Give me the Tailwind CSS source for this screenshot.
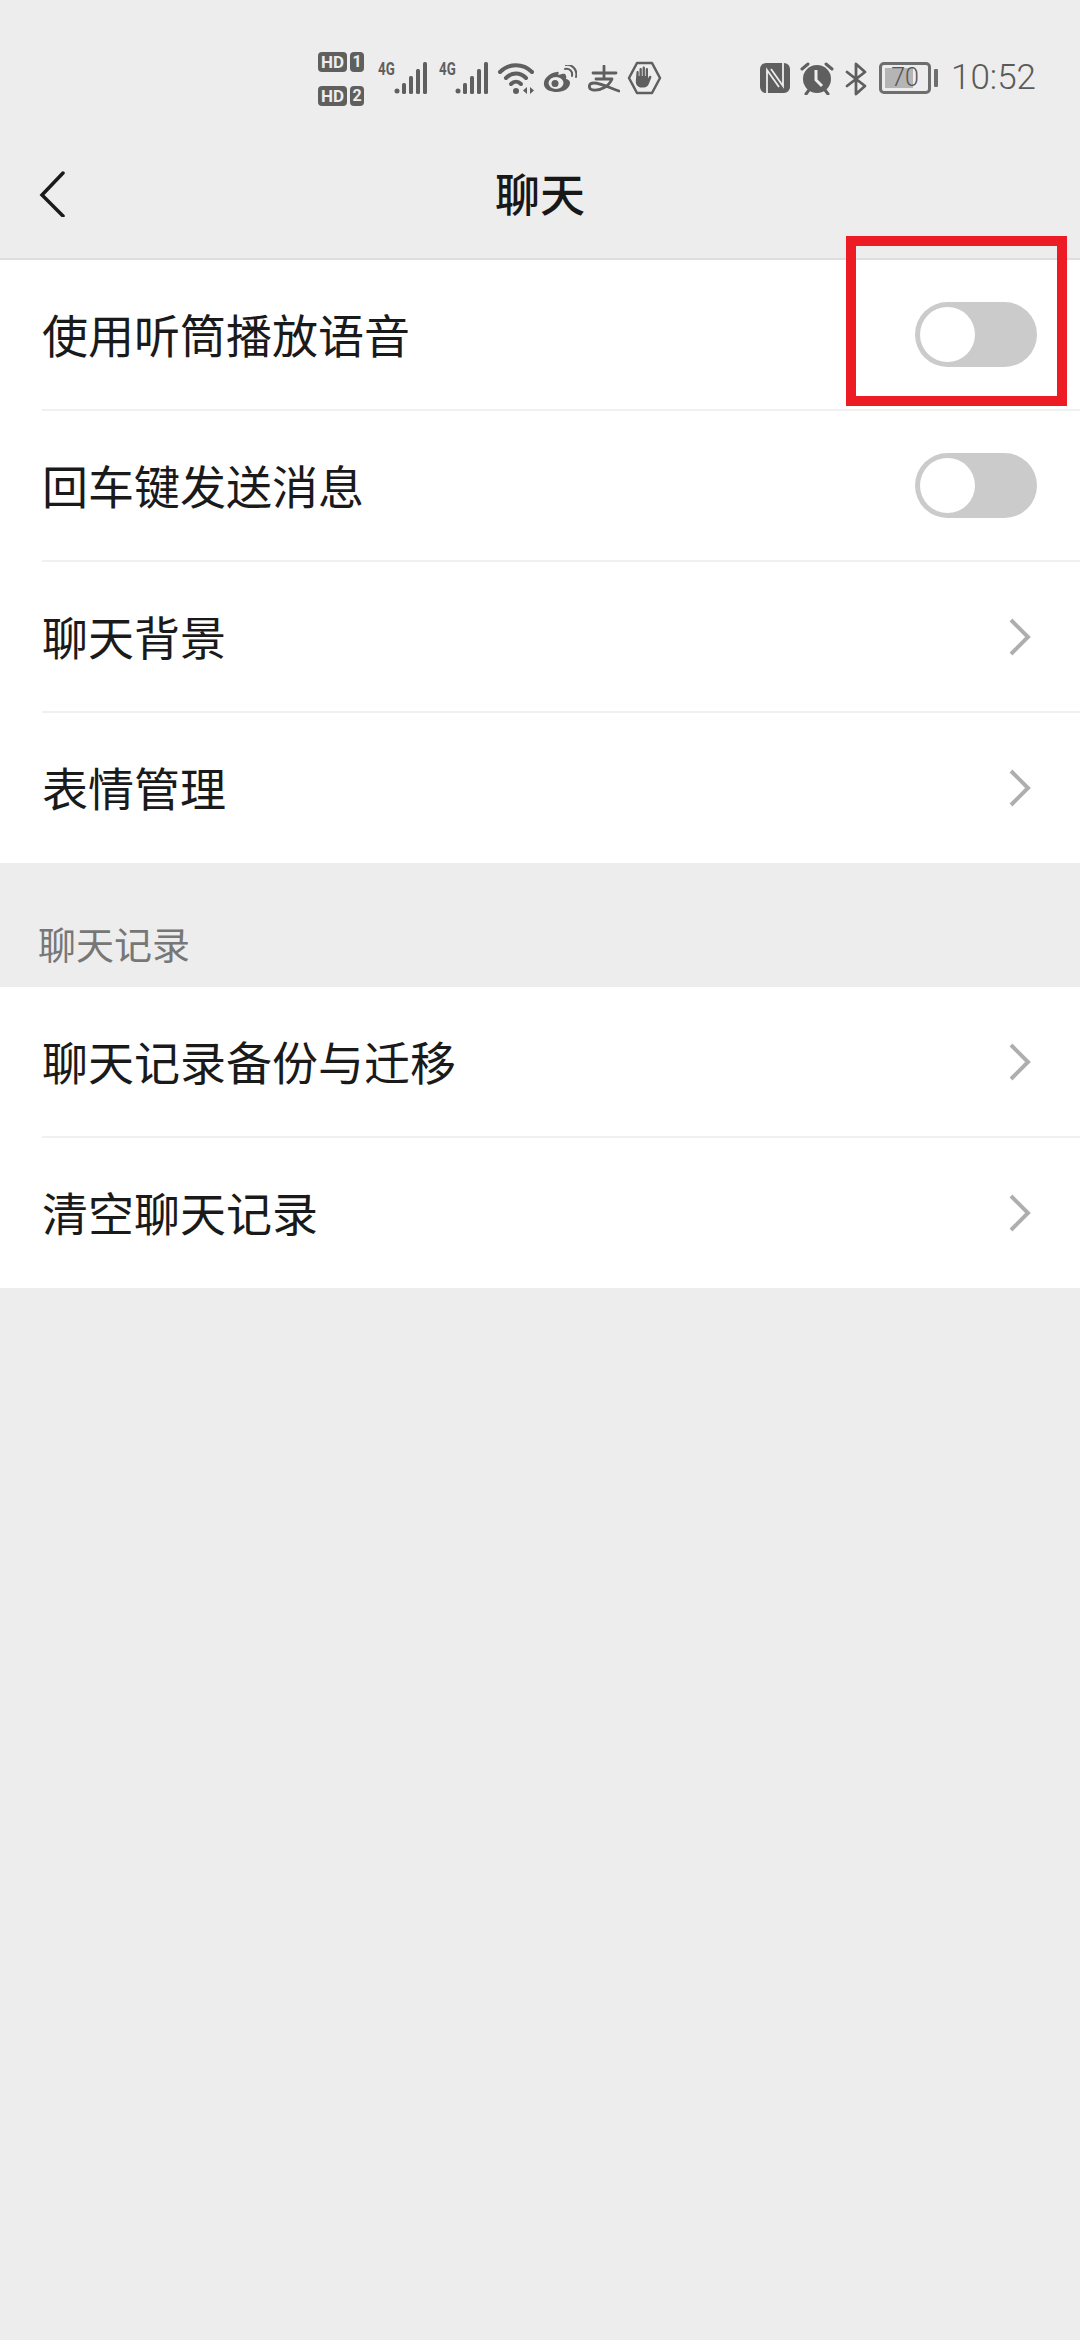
<!DOCTYPE html>
<html lang="zh-CN">
<head>
    <meta charset="UTF-8">
    <meta name="viewport" content="width=device-width, initial-scale=1.0">
    <title>聊天</title>
    <script src="https://cdn.jsdelivr.net/npm/@tailwindcss/browser@4"></script>
</head>
<body class="relative w-[1080px] h-[2340px] overflow-hidden bg-[#ededed] font-['Noto_Sans_CJK_SC',sans-serif]">

    <!-- status bar -->
    <div class="h-[120px] pt-[52px] pl-[318px] flex items-start text-[#5f5f5f]">
        <div class="w-[48px] flex flex-col gap-[14px]">
            <div class="flex gap-[3px]">
                <span class="w-[29px] h-[20px] rounded-[4px] bg-[#5f5f5f] text-[#ededed] text-[17px] leading-[20px] font-bold text-center font-['Roboto',sans-serif]">HD</span>
                <span class="w-[14px] h-[20px] rounded-[4px] bg-[#5f5f5f] text-[#ededed] text-[16px] leading-[20px] font-bold text-center font-['Roboto',sans-serif]">1</span>
            </div>
            <div class="flex gap-[3px]">
                <span class="w-[29px] h-[20px] rounded-[4px] bg-[#5f5f5f] text-[#ededed] text-[17px] leading-[20px] font-bold text-center font-['Roboto',sans-serif]">HD</span>
                <span class="w-[14px] h-[20px] rounded-[4px] bg-[#5f5f5f] text-[#ededed] text-[16px] leading-[20px] font-bold text-center font-['Roboto',sans-serif]">2</span>
            </div>
        </div>

        <div class="relative ml-[12px] w-[50px] h-[44px]">
            <span class="absolute left-0 top-[9px] text-[19px] leading-[16px] font-bold scale-x-[0.7] origin-left font-['Roboto',sans-serif]">4G</span>
            <svg class="absolute left-[16px] top-[10px]" width="34" height="33" viewBox="0 0 34 33" fill="#5f5f5f">
                <circle cx="3" cy="29" r="2.500"/>
                <rect x="8" y="21" width="4" height="11" rx="1.500"/>
                <rect x="15" y="14" width="4" height="18" rx="1.500"/>
                <rect x="22" y="7" width="4" height="25" rx="1.500"/>
                <rect x="29" y="0" width="4" height="32" rx="1.500"/>
            </svg>
        </div>
        <div class="relative ml-[11px] w-[50px] h-[44px]">
            <span class="absolute left-0 top-[9px] text-[19px] leading-[16px] font-bold scale-x-[0.7] origin-left font-['Roboto',sans-serif]">4G</span>
            <svg class="absolute left-[16px] top-[10px]" width="34" height="33" viewBox="0 0 34 33" fill="#5f5f5f">
                <circle cx="3" cy="29" r="2.500"/>
                <rect x="8" y="21" width="4" height="11" rx="1.500"/>
                <rect x="15" y="14" width="4" height="18" rx="1.500"/>
                <rect x="22" y="7" width="4" height="25" rx="1.500"/>
                <rect x="29" y="0" width="4" height="32" rx="1.500"/>
            </svg>
        </div>

        <!-- wifi -->
        <svg class="ml-[9px] mt-[10px]" width="38" height="33" viewBox="0 0 38 33" fill="none" stroke="#5f5f5f" stroke-width="4" stroke-linecap="round">
            <path d="M2 10C11 1 25 1 34 10"/>
            <path d="M8 16C14 10 22 10 28 16"/>
            <path d="M13 22C16 19 20 19 23 22"/>
            <circle cx="18" cy="29" r="3" fill="#5f5f5f" stroke="none"/>
            <path d="M29 25v7l-4-3.500zM32 25v7l4-3.500z" fill="#5f5f5f" stroke="none"/>
        </svg>

        <!-- weibo -->
        <svg class="ml-[7px] mt-[13px]" width="34" height="28" viewBox="0 0 34 28" fill="none">
            <path d="M14 7C6 8 0 14 1 20C2 25 8 27 14 27C21 27 27 23 27 18C27 15 24 14 23 14C24 10 22 8 19 9L15 10C16 8 16 6 14 7Z" fill="#5f5f5f"/>
            <ellipse cx="13" cy="18" rx="7.500" ry="6" fill="#ededed"/>
            <circle cx="12" cy="18.500" r="3.500" fill="#5f5f5f"/>
            <path d="M22 4C26 3 30 6 29 11M23 0C29 -1 35 5 33 12" stroke="#5f5f5f" stroke-width="2" stroke-linecap="round"/>
        </svg>

        <!-- alipay -->
        <svg class="ml-[11px] mt-[13px]" width="32" height="28" viewBox="0 0 32 28" fill="none" stroke="#5f5f5f" stroke-width="2.800" stroke-linecap="round" stroke-linejoin="round">
            <path d="M5 8H28M16 1V13"/>
            <path d="M8 14H24C21 21 13 26 5 25C0 24 0 18 6 18C13 18 22 23 31 26"/>
        </svg>

        <!-- app guard -->
        <svg class="ml-[7px] mt-[9px]" width="35" height="34" viewBox="0 0 35 34">
            <path d="M10 2H25L33 17L25 32H10L2 17Z" fill="none" stroke="#5f5f5f" stroke-width="2.500" stroke-linejoin="round"/>
            <path d="M9.500 11c0-1.500 2.200-1.500 2.200 0v4h.8V8c0-1.500 2.300-1.500 2.300 0v7h.8V6.500c0-1.500 2.300-1.500 2.300 0V15h.8V8c0-1.500 2.300-1.500 2.300 0v9.500l1-2c.8-1.600 3-.8 2.300 1l-2.300 6c-1 2.500-2.800 4-5.500 4h-2c-3.500 0-5.700-2.500-5.700-6z" fill="#5f5f5f"/>
        </svg>

        <!-- nfc -->
        <svg class="ml-[98px] mt-[11px]" width="30" height="30" viewBox="0 0 30 30">
            <rect width="30" height="30" rx="6" fill="#5f5f5f"/>
            <path d="M7 30V7L19 24M23 0V23L11 6" fill="none" stroke="#ededed" stroke-width="1.800"/>
        </svg>

        <!-- alarm -->
        <svg class="ml-[10px] mt-[10px]" width="34" height="33" viewBox="0 0 34 33">
            <circle cx="17" cy="17" r="14" fill="#5f5f5f"/>
            <path d="M16 8v10l6 6" fill="none" stroke="#ededed" stroke-width="3"/>
            <path d="M2 7L8 2M32 7L26 2M6 32L9 28M28 32L25 28" stroke="#5f5f5f" stroke-width="3" stroke-linecap="round"/>
        </svg>

        <!-- bluetooth -->
        <svg class="ml-[11px] mt-[10px]" width="22" height="34" viewBox="0 0 22 34" fill="none" stroke="#5f5f5f" stroke-width="2.800" stroke-linejoin="round" stroke-linecap="round">
            <path d="M2 10L20 24L11 32V2L20 10L2 24"/>
        </svg>

        <!-- battery -->
        <div class="relative ml-[12px] mt-[10px] w-[52px] h-[32px] rounded-[5px] border-[3px] border-[#6e6e6e]">
            <div class="absolute left-[3px] top-[3px] bottom-[3px] w-[28px] bg-[#b5b5b5]"></div>
            <span class="absolute inset-0 text-center text-[#555] text-[25px] leading-[26px] font-['Roboto',sans-serif] font-light">70</span>
        </div>
        <div class="ml-[3px] mt-[17px] w-[4px] h-[18px] rounded-[1px] bg-[#6e6e6e]"></div>

        <span class="ml-[13px] mt-[5px] text-[35px] leading-[42px] font-['Roboto',sans-serif] font-light text-[#5a5a5a]">10:52</span>
    </div>

    <!-- title bar -->
    <header class="relative h-[140px] flex items-center justify-center border-b-2 border-[#dedede] pt-[8px]">
        <svg class="absolute left-[38px] top-[49px]" width="30" height="48" viewBox="0 0 30 48" fill="none" stroke="#1a1a1a" stroke-width="3.500" stroke-linecap="round">
            <path d="M25 4L4 26L25 47"/>
        </svg>
        <h1 class="text-[45px] leading-[60px] font-medium text-[#181818]">聊天</h1>
    </header>

    <main>
        <section class="bg-white">
            <div class="h-[151px] ml-[42px] pr-[43px] flex items-center justify-between border-b-2 border-[#f0f0f0]">
                <span class="text-[46px] leading-[60px] text-[#1a1a1a] -translate-y-[2px]">使用听筒播放语音</span>
                <div class="w-[122px] h-[65px] rounded-full bg-[#cbcbcb] p-[5px]"><div class="w-[55px] h-[55px] rounded-full bg-white"></div></div>
            </div>
            <div class="h-[151px] ml-[42px] pr-[43px] flex items-center justify-between border-b-2 border-[#f0f0f0]">
                <span class="text-[46px] leading-[60px] text-[#1a1a1a] -translate-y-[2px]">回车键发送消息</span>
                <div class="w-[122px] h-[65px] rounded-full bg-[#cbcbcb] p-[5px]"><div class="w-[55px] h-[55px] rounded-full bg-white"></div></div>
            </div>
            <div class="h-[151px] ml-[42px] pr-[48px] flex items-center justify-between border-b-2 border-[#f0f0f0]">
                <span class="text-[46px] leading-[60px] text-[#1a1a1a] -translate-y-[2px]">聊天背景</span>
                <svg width="24" height="38" viewBox="0 0 24 38" fill="none" stroke="#aeaeae" stroke-width="4"><path d="M3 2L20 19L3 36"/></svg>
            </div>
            <div class="h-[150px] ml-[42px] pr-[48px] flex items-center justify-between">
                <span class="text-[46px] leading-[60px] text-[#1a1a1a] -translate-y-[2px]">表情管理</span>
                <svg width="24" height="38" viewBox="0 0 24 38" fill="none" stroke="#aeaeae" stroke-width="4"><path d="M3 2L20 19L3 36"/></svg>
            </div>
        </section>

        <h2 class="h-[124px] pl-[38px] pt-[54px] text-[38px] leading-[52px] text-[#777777]">聊天记录</h2>

        <section class="bg-white">
            <div class="h-[151px] ml-[42px] pr-[48px] flex items-center justify-between border-b-2 border-[#f0f0f0]">
                <span class="text-[46px] leading-[60px] text-[#1a1a1a] -translate-y-[2px]">聊天记录备份与迁移</span>
                <svg width="24" height="38" viewBox="0 0 24 38" fill="none" stroke="#aeaeae" stroke-width="4"><path d="M3 2L20 19L3 36"/></svg>
            </div>
            <div class="h-[150px] ml-[42px] pr-[48px] flex items-center justify-between">
                <span class="text-[46px] leading-[60px] text-[#1a1a1a] -translate-y-[2px]">清空聊天记录</span>
                <svg width="24" height="38" viewBox="0 0 24 38" fill="none" stroke="#aeaeae" stroke-width="4"><path d="M3 2L20 19L3 36"/></svg>
            </div>
        </section>
    </main>

    <!-- red annotation box -->
    <div class="absolute left-[846px] top-[236px] w-[221px] h-[170px] border-[10px] border-[#ed1c24]"></div>
</body>
</html>
